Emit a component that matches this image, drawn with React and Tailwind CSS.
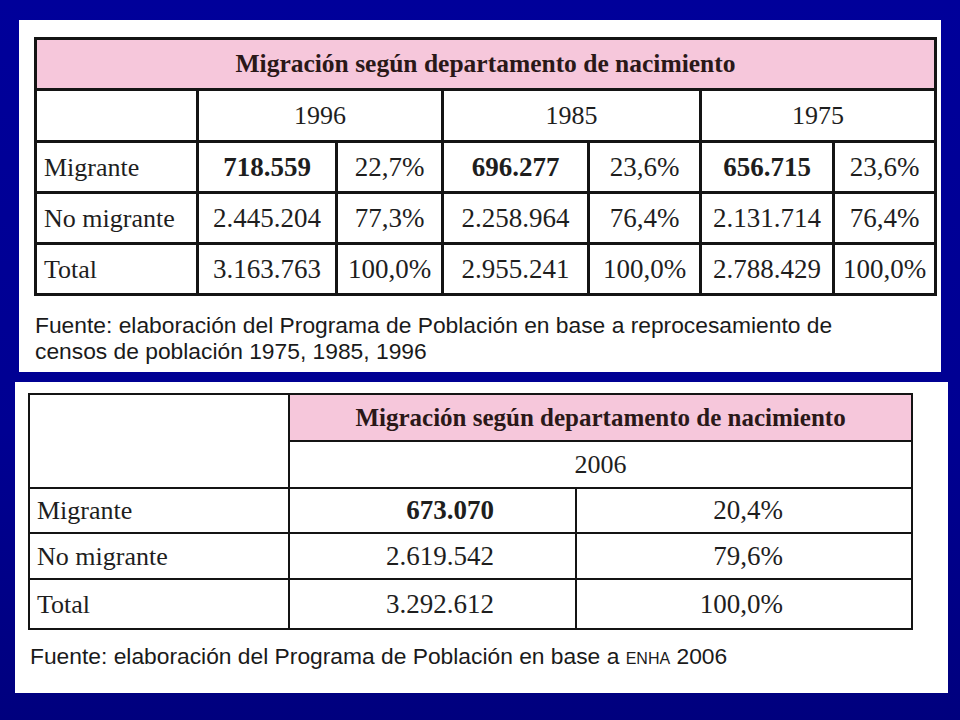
const serif = { fontFamily: '"Liberation Serif", "DejaVu Serif", serif' };
const sans = { fontFamily: '"Liberation Sans", Arial, sans-serif' };

const cell = 'border-[3px] border-[#141414] p-0';
const cell2 = 'border-2 border-[#141414] p-0';

const rows1 = [
  { label: 'Migrante', bold: true, v: ['718.559', '22,7%', '696.277', '23,6%', '656.715', '23,6%'] },
  { label: 'No migrante', v: ['2.445.204', '77,3%', '2.258.964', '76,4%', '2.131.714', '76,4%'] },
  { label: 'Total', v: ['3.163.763', '100,0%', '2.955.241', '100,0%', '2.788.429', '100,0%'] },
];

const rows2 = [
  { label: 'Migrante', bold: true, n: '673.070', p: '20,4%', h: 'h-[45px]' },
  { label: 'No migrante', n: '2.619.542', p: '79,6%', h: 'h-[46px]' },
  { label: 'Total', n: '3.292.612', p: '100,0%', h: 'h-[50px]' },
];

function TableOne() {
  return (
    <table className="table-fixed border-collapse w-[900px] text-[#1e1e1e] text-[26px]" style={serif}>
      <colgroup>
        <col className="w-[162px]" />
        <col className="w-[139px]" />
        <col className="w-[106px]" />
        <col className="w-[146px]" />
        <col className="w-[112px]" />
        <col className="w-[133px]" />
        <col className="w-[102px]" />
      </colgroup>
      <tbody>
        <tr className="h-[51px]">
          <td colSpan={7} className={`${cell} bg-[#f6c7db] text-center font-bold text-[25.5px] text-[#2a1818]`}>
            Migración según departamento de nacimiento
          </td>
        </tr>
        <tr className="h-[52px]">
          <td className={cell}></td>
          <td colSpan={2} className={`${cell} text-center`}>1996</td>
          <td colSpan={2} className={`${cell} text-center`}>1985</td>
          <td colSpan={2} className={`${cell} text-center`}>1975</td>
        </tr>
        {rows1.map((r) => (
          <tr key={r.label} className="h-[51px]">
            <td className={`${cell} pl-[7px]`}>{r.label}</td>
            {r.v.map((x, i) => (
              <td key={i} className={`${cell} text-center text-[27px] ${r.bold && i % 2 === 0 ? 'font-bold' : ''}`}>
                {x}
              </td>
            ))}
          </tr>
        ))}
      </tbody>
    </table>
  );
}

function TableTwo() {
  return (
    <table className="table-fixed border-collapse w-[883px] text-[#1e1e1e] text-[26px]" style={serif}>
      <colgroup>
        <col className="w-[260px]" />
        <col className="w-[287px]" />
        <col className="w-[336px]" />
      </colgroup>
      <tbody>
        <tr className="h-[47px]">
          <td rowSpan={2} className={cell2}></td>
          <td colSpan={2} className={`${cell2} bg-[#f6c7db] text-center font-bold text-[25px] text-[#2a1818]`}>
            Migración según departamento de nacimiento
          </td>
        </tr>
        <tr className="h-[47px]">
          <td colSpan={2} className={`${cell2} text-center`}>2006</td>
        </tr>
        {rows2.map((r) => (
          <tr key={r.label} className={r.h}>
            <td className={`${cell2} pl-[7px]`}>{r.label}</td>
            <td className={`${cell2} text-right pr-[81px] text-[27px] ${r.bold ? 'font-bold' : ''}`}>{r.n}</td>
            <td className={`${cell2} text-right pr-[128px] text-[27px]`}>{r.p}</td>
          </tr>
        ))}
      </tbody>
    </table>
  );
}

export default function App() {
  return (
    <div className="w-[960px] h-[720px] overflow-hidden bg-[linear-gradient(to_bottom,#00009a_0%,#000092_60%,#00007e_100%)] pt-[20px] flex flex-col">
      <div className="ml-[19px] w-[922px] h-[352px] bg-white pt-[17px] pl-[15px]">
        <TableOne />
        <p className="mt-[16px] pl-[1px] text-[22.8px] leading-[26px] text-[#1a1a1a]" style={sans}>
          Fuente: elaboración del Programa de Población en base a reprocesamiento de
          <br />
          censos de población 1975, 1985, 1996
        </p>
      </div>
      <div className="mt-[10px] ml-[15px] w-[933px] h-[311px] bg-white pt-[11px] pl-[13px]">
        <TableTwo />
        <p className="mt-[13px] pl-[2px] text-[22.8px] leading-[26px] text-[#1a1a1a]" style={sans}>
          Fuente: elaboración del Programa de Población en base a{' '}
          <span className="[font-variant:small-caps]">enha</span> 2006
        </p>
      </div>
    </div>
  );
}
